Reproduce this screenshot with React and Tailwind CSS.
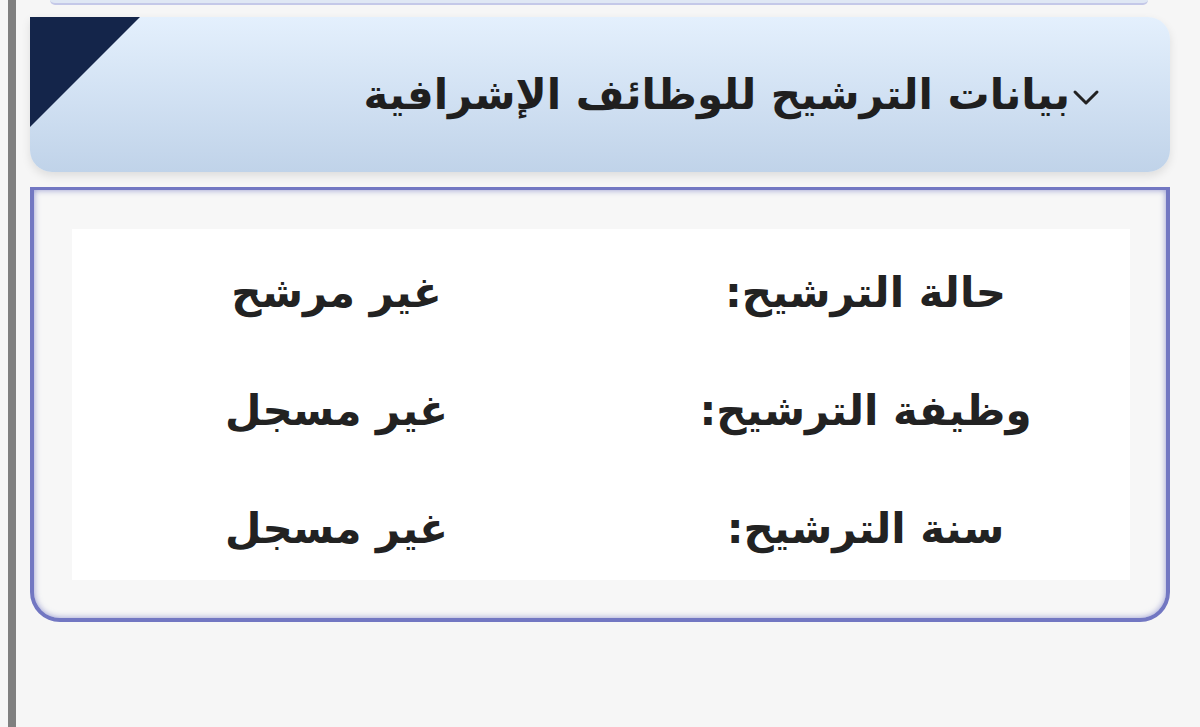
import React from 'react';

const rows = [
  { label: 'حالة الترشيح:', value: 'غير مرشح' },
  { label: 'وظيفة الترشيح:', value: 'غير مسجل' },
  { label: 'سنة الترشيح:', value: 'غير مسجل' },
];

const font = { fontFamily: '"DejaVu Sans", "Noto Sans", sans-serif' };

export default function App() {
  return (
    <div className="min-h-[727px] bg-[#f6f6f6] flex" style={font}>
      {/* left scroll edge */}
      <div className="w-2 ml-2 bg-[#808080] shrink-0" />

      <div className="flex-1 pl-[14px] pr-[30px]">
        {/* previous card, cut off at the top */}
        <div className="ml-[20px] mr-[22px] h-[5px] bg-[#dfe7f4] rounded-b-md border-b-2 border-[#c4c8e8]" />

        {/* section header */}
        <div
          dir="rtl"
          className="relative mt-3 h-[155px] rounded-[22px] rounded-tl-none bg-gradient-to-b from-[#e4f0fd] to-[#c0d3e9] shadow-[0_4px_10px_rgba(0,0,0,0.10)] flex items-center pr-[70px]"
        >
          <div className="absolute top-0 left-0 w-[110px] h-[110px] bg-[#14254a] [clip-path:polygon(0_0,100%_0,0_100%)]" />
          <div className="flex items-center gap-0.5 text-[#1f1f1f]">
            <svg width="28" height="22" viewBox="0 0 28 22" fill="none" className="mt-1">
              <path d="M3 6 L14 17 L25 6" stroke="#222" strokeWidth="3" strokeLinecap="round" strokeLinejoin="round" />
            </svg>
            <h2 className="text-[42px] font-bold leading-none">بيانات الترشيح للوظائف الإشرافية</h2>
          </div>
        </div>

        {/* section body */}
        <div className="mt-[15px] h-[435px] bg-[#f7f7f7] border-4 border-t-[3px] border-[#7277c2] rounded-b-[30px] shadow-[inset_0_0_6px_rgba(114,119,194,0.75)] pt-[39px] pl-[38px] pr-[36px] pb-[38px]">
          <div dir="rtl" className="h-full bg-white grid grid-cols-2 grid-rows-[118px_118px_118px] pt-1">
            {rows.map((r, i) => (
              <React.Fragment key={i}>
                <div className="flex items-center justify-center text-[42px] font-bold text-[#222]">{r.label}</div>
                <div className="flex items-center justify-center text-[42px] font-bold text-[#222]">{r.value}</div>
              </React.Fragment>
            ))}
          </div>
        </div>
      </div>
    </div>
  );
}
